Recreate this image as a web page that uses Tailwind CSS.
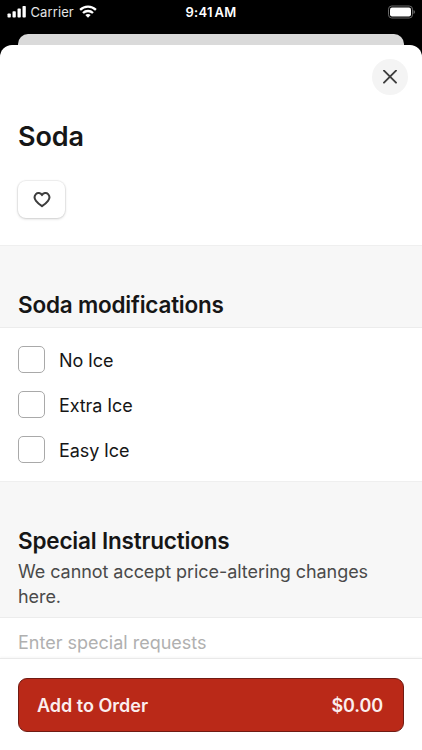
<!DOCTYPE html>
<html lang="en">
<head>
<meta charset="utf-8">
<title>Soda</title>
<script src="https://cdn.jsdelivr.net/npm/@tailwindcss/browser@4"></script>
</head>
<body class="bg-black">
<div class="flex h-[750px] w-[422px] flex-col overflow-hidden bg-black font-['Inter',sans-serif] text-[#161616]">
  <header class="grid h-[34px] shrink-0 grid-cols-3 items-start px-[7px] pt-[2px] text-white">
    <div class="flex h-5 items-center">
      <svg class="-mt-px h-[13px] w-[19px]" viewBox="0 0 19 13" fill="#fff"><rect x="0.5" y="8.5" width="3.3" height="4" rx="0.8"/><rect x="5.5" y="6.3" width="3.3" height="6.2" rx="0.8"/><rect x="10.5" y="3.6" width="3.3" height="8.9" rx="0.8"/><rect x="15.5" y="1" width="3.3" height="11.5" rx="0.8"/></svg>
      <span class="ml-[4.5px] text-[13px] leading-5 tracking-[0.1px] whitespace-nowrap text-white/90">Carrier</span>
      <svg class="-mt-px ml-[5px] h-[13px] w-[18px]" viewBox="0 0 18 13" fill="none" stroke="#fff" stroke-width="2.3"><path d="M1.1 4.9C5.5 0.6 12.5 0.6 16.9 4.9"/><path d="M4 8C6.8 5.3 11.2 5.3 14 8"/><path d="M6.3 10.1C7.8 8.7 10.2 8.7 11.7 10.1L9 12.8Z" fill="#fff" stroke="none"/></svg>
    </div>
    <div class="text-center text-[13px] leading-5 font-semibold tracking-[0.3px] whitespace-nowrap [word-spacing:-2px]">9:41 AM</div>
    <div class="flex h-5 items-center justify-end">
      <svg class="-mt-px h-[14px] w-[28px]" viewBox="0 0 28 14"><rect x="1.5" y="1" width="24" height="12" rx="3.2" fill="none" stroke="#686868"/><rect x="3" y="2.5" width="21" height="9" rx="2" fill="#fff"/><path d="M26.5 5Q28 5.5 28 7T26.5 9Z" fill="#686868"/></svg>
    </div>
  </header>
  <div class="mx-[18px] h-[11px] shrink-0 rounded-t-[10px] bg-[#dadada]"></div>
  <main class="flex flex-1 flex-col overflow-hidden rounded-t-[12px] bg-white">
    <section class="h-[201px] shrink-0 border-b border-[#efefef] px-[18px]">
      <div class="-mr-1 flex justify-end pt-[14px]">
        <button aria-label="Close" class="flex size-9 items-center justify-center rounded-full bg-[#f4f4f4]">
          <svg class="size-[14px]" viewBox="0 0 14 14" fill="none" stroke="#3d3d3d" stroke-width="1.9" stroke-linecap="round"><path d="M1 0.7L13 12.7M13 0.7L1 12.7"/></svg>
        </button>
      </div>
      <h1 class="mt-[24px] text-[27px] leading-9 font-semibold tracking-[-0.15px]">Soda</h1>
      <button aria-label="Favorite" class="mt-[26px] flex h-[37px] w-[47px] items-center justify-center rounded-[8px] bg-white shadow-[0_0_1px_1px_rgba(0,0,0,0.06),0_1px_3px_rgba(0,0,0,0.16)]">
        <svg class="h-[16px] w-[18px]" viewBox="0 0 18 16" fill="none" stroke="#3d3d3d" stroke-width="2" stroke-linejoin="round"><path d="M9 3.1C7.7 0.8 4.6 0.3 2.9 2.1C1.2 4 1.4 6.8 3 8.8C4.7 11 6.8 12.7 9 14.2C11.2 12.7 13.3 11 15 8.8C16.6 6.8 16.8 4 15.1 2.1C13.4 0.3 10.3 0.8 9 3.1Z"/></svg>
      </button>
    </section>
    <div class="flex h-[82px] shrink-0 items-end border-b border-[#ececec] bg-[#f7f7f7] px-[18px] pb-[6px]">
      <h2 class="text-[22.5px] leading-8 font-semibold tracking-[-0.21px]">Soda modifications</h2>
    </div>
    <div class="flex h-[154px] shrink-0 flex-col gap-[18px] border-b border-[#efefef] px-[18px] pt-[18px] text-[18px] leading-[27px] tracking-[-0.1px]">
      <label class="flex items-center gap-[14px]"><span class="size-[27px] rounded-[5px] border border-[#a9a9a9]"></span><span class="pt-[2px] leading-[25px]">No Ice</span></label>
      <label class="flex items-center gap-[14px]"><span class="size-[27px] rounded-[5px] border border-[#a9a9a9]"></span><span class="pt-[2px] leading-[25px]">Extra Ice</span></label>
      <label class="flex items-center gap-[14px]"><span class="size-[27px] rounded-[5px] border border-[#a9a9a9]"></span><span class="pt-[2px] leading-[25px]">Easy Ice</span></label>
    </div>
    <div class="h-[136px] shrink-0 border-b border-[#ececec] bg-[#f7f7f7] px-[18px] pt-[43px]">
      <h2 class="text-[22.5px] leading-8 font-semibold tracking-[-0.19px]">Special Instructions</h2>
      <p class="mt-[2px] text-[18px] leading-[25px] tracking-[-0.06px] text-[#4a4a4a]">We cannot accept price-altering changes<br>here.</p>
    </div>
    <div class="h-[40px] shrink-0 px-[18px] pt-[12px] text-[18px] leading-[26px] text-[#b0b0b0]">Enter special requests</div>
    <footer class="flex-1 border-t border-[#e9e9e9] bg-white px-[18px] pt-[19px] shadow-[0_-1px_2px_rgba(0,0,0,0.04)]">
      <button class="flex h-[54px] w-full items-center justify-between rounded-[9px] border border-[#701b13] bg-[#ba2918] pr-5 pl-[18px] text-[18px] font-semibold text-[#fbeeee]"><span>Add to Order</span><span class="tracking-[-0.1px]">$0.00</span></button>
    </footer>
  </main>
</div>
</body>
</html>
